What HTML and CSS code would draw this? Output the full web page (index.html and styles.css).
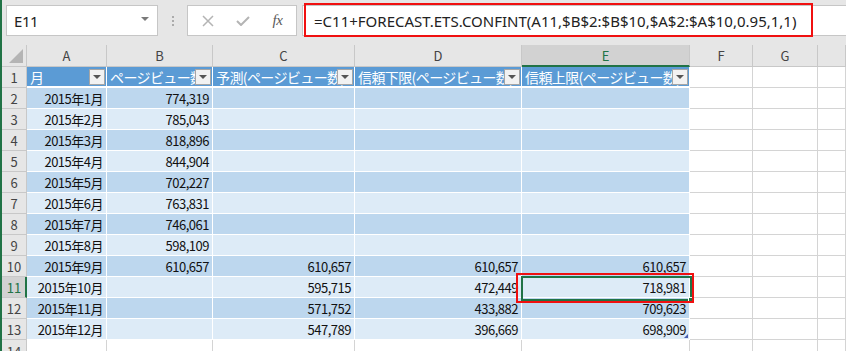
FILE: index.html
```html
<!DOCTYPE html>
<html lang="ja">
<head>
<meta charset="utf-8">
<link rel="stylesheet" href="styles.css">
</head>
<body>
<div class="app">
  <div class="fbar">
    <div class="namebox"><span class="nb-text">E11</span><span class="nb-arrow"></span></div>
    <div class="grip"><i></i><i></i><i></i></div>
    <div class="fbtns">
      <span class="fb"><svg width="12" height="12" viewBox="0 0 12 12"><path d="M1 1 L11 11 M11 1 L1 11" stroke="#b4b4b4" stroke-width="1.5" fill="none"/></svg></span>
      <span class="fb"><svg width="14" height="10" viewBox="0 0 14 10"><path d="M1 5 L5 9 L13 1" stroke="#b4b4b4" stroke-width="2" fill="none"/></svg></span>
      <span class="fb fx">fx</span>
    </div>
    <div class="finput"><span class="ftext">=C11+FORECAST.ETS.CONFINT(A11,$B$2:$B$10,$A$2:$A$10,0.95,1,1)</span></div>
    <div class="annot annot-formula"></div>
  </div>

  <div class="sheet">
    <div class="row colhdr">
      <div class="corner"><span class="corner-tri"></span></div>
      <div class="ch">A</div><div class="ch">B</div><div class="ch">C</div><div class="ch">D</div><div class="ch ch-sel">E</div><div class="ch">F</div><div class="ch">G</div><div class="ch"></div>
    </div>

    <div class="row">
      <div class="rh">1</div>
      <div class="c th"><span class="tht">月</span><span class="dd"></span></div>
      <div class="c th"><span class="tht">ページビュー数</span><span class="dd"></span></div>
      <div class="c th"><span class="tht">予測(ページビュー数)</span><span class="dd"></span></div>
      <div class="c th"><span class="tht">信頼下限(ページビュー数)</span><span class="dd"></span></div>
      <div class="c th"><span class="tht">信頼上限(ページビュー数)</span><span class="dd"></span></div>
      <div class="c"></div><div class="c"></div><div class="c"></div>
    </div>

    <div class="row band1"><div class="rh">2</div><div class="c t">2015年1月</div><div class="c t">774,319</div><div class="c t"></div><div class="c t"></div><div class="c t"></div><div class="c"></div><div class="c"></div><div class="c"></div></div>
    <div class="row band2"><div class="rh">3</div><div class="c t">2015年2月</div><div class="c t">785,043</div><div class="c t"></div><div class="c t"></div><div class="c t"></div><div class="c"></div><div class="c"></div><div class="c"></div></div>
    <div class="row band1"><div class="rh">4</div><div class="c t">2015年3月</div><div class="c t">818,896</div><div class="c t"></div><div class="c t"></div><div class="c t"></div><div class="c"></div><div class="c"></div><div class="c"></div></div>
    <div class="row band2"><div class="rh">5</div><div class="c t">2015年4月</div><div class="c t">844,904</div><div class="c t"></div><div class="c t"></div><div class="c t"></div><div class="c"></div><div class="c"></div><div class="c"></div></div>
    <div class="row band1"><div class="rh">6</div><div class="c t">2015年5月</div><div class="c t">702,227</div><div class="c t"></div><div class="c t"></div><div class="c t"></div><div class="c"></div><div class="c"></div><div class="c"></div></div>
    <div class="row band2"><div class="rh">7</div><div class="c t">2015年6月</div><div class="c t">763,831</div><div class="c t"></div><div class="c t"></div><div class="c t"></div><div class="c"></div><div class="c"></div><div class="c"></div></div>
    <div class="row band1"><div class="rh">8</div><div class="c t">2015年7月</div><div class="c t">746,061</div><div class="c t"></div><div class="c t"></div><div class="c t"></div><div class="c"></div><div class="c"></div><div class="c"></div></div>
    <div class="row band2"><div class="rh">9</div><div class="c t">2015年8月</div><div class="c t">598,109</div><div class="c t"></div><div class="c t"></div><div class="c t"></div><div class="c"></div><div class="c"></div><div class="c"></div></div>
    <div class="row band1"><div class="rh">10</div><div class="c t">2015年9月</div><div class="c t">610,657</div><div class="c t">610,657</div><div class="c t">610,657</div><div class="c t">610,657</div><div class="c"></div><div class="c"></div><div class="c"></div></div>
    <div class="row band2 row-active"><div class="rh rh-sel">11</div><div class="c t">2015年10月</div><div class="c t"></div><div class="c t">595,715</div><div class="c t">472,449</div><div class="c t active">718,981<span class="sel-box"><span class="fill-handle"></span></span><span class="annot annot-cell"></span></div><div class="c"></div><div class="c"></div><div class="c"></div></div>
    <div class="row band1"><div class="rh">12</div><div class="c t">2015年11月</div><div class="c t"></div><div class="c t">571,752</div><div class="c t">433,882</div><div class="c t">709,623</div><div class="c"></div><div class="c"></div><div class="c"></div></div>
    <div class="row band2"><div class="rh">13</div><div class="c t">2015年12月</div><div class="c t"></div><div class="c t">547,789</div><div class="c t">396,669</div><div class="c t last">698,909<span class="resize"></span></div><div class="c"></div><div class="c"></div><div class="c"></div></div>
    <div class="row row-partial"><div class="rh">14</div><div class="c"></div><div class="c"></div><div class="c"></div><div class="c"></div><div class="c"></div><div class="c"></div><div class="c"></div><div class="c"></div></div>
  </div>
</div>
</body>
</html>
```

FILE: styles.css
```css
* { box-sizing: border-box; }
html, body { margin: 0; padding: 0; }
body {
  width: 846px;
  height: 351px;
  overflow: hidden;
  background: #ffffff;
  font-family: "Noto Sans CJK JP", "Noto Sans", sans-serif;
}
.app {
  width: 846px;
  height: 351px;
  border-left: 2px solid #217346;
  overflow: hidden;
}

/* formula bar */
.fbar {
  position: relative;
  height: 45px;
  background: #e6e6e6;
  display: flex;
  align-items: flex-start;
  padding: 5px 0 0 4px;
}
.namebox {
  width: 152px;
  height: 31px;
  background: #fff;
  border: 1px solid #c6c6c6;
  display: flex;
  align-items: center;
  justify-content: space-between;
  padding: 0 8px 0 7px;
}
.nb-text {
  font-family: "Noto Sans", sans-serif;
  font-size: 15px;
  color: #222;
  letter-spacing: -0.4px;
}
.nb-arrow {
  width: 0; height: 0;
  border-left: 4px solid transparent;
  border-right: 4px solid transparent;
  border-top: 4px solid #7a7a7a;
  margin-top: -3px;
}
.grip {
  width: 29px;
  height: 31px;
  display: flex;
  flex-direction: column;
  align-items: center;
  justify-content: center;
  gap: 2px;
}
.grip i {
  display: block;
  width: 2px;
  height: 2px;
  background: #ababab;
}
.fbtns {
  width: 110px;
  height: 31px;
  background: #fff;
  border: 1px solid #c6c6c6;
  display: flex;
  align-items: center;
  padding-left: 2px;
}
.fb {
  width: 35px;
  display: flex;
  justify-content: center;
  align-items: center;
}
.fx {
  font-family: "Liberation Serif", serif;
  font-style: italic;
  font-size: 15px;
  color: #5a5a5a;
  letter-spacing: -0.5px;
}
.finput {
  flex: 1;
  margin-left: 5px;
  height: 31px;
  background: #fff;
  border: 1px solid #c6c6c6;
  border-right: none;
  display: flex;
  align-items: center;
  padding-left: 11px;
}
.ftext {
  font-family: "Noto Sans", sans-serif;
  font-size: 15px;
  color: #222;
  white-space: nowrap;
}
.annot {
  position: absolute;
  border: 2px solid #f01010;
  pointer-events: none;
}
.annot-formula {
  left: 302px;
  top: 3px;
  width: 509px;
  height: 34px;
}

/* sheet */
.sheet { font-size: 13px; letter-spacing: -0.5px; }
.row {
  display: grid;
  grid-template-columns: 25px 80px 106px 142px 167px 168px 63px 65px 1fr;
  height: 21px;
}
.row-active { position: relative; z-index: 5; }
.row-partial .rh { align-items: flex-start; padding-top: 2px; }
.colhdr { height: 22px; }
.corner, .ch, .rh {
  background: #e6e6e6;
  border-right: 1px solid #c8c8c8;
  border-bottom: 1px solid #c8c8c8;
  color: #444;
  display: flex;
  align-items: center;
  justify-content: center;
}
.corner {
  position: relative;
  align-items: flex-end;
  justify-content: flex-end;
  padding: 0 3px 3px 0;
}
.corner-tri {
  width: 0; height: 0;
  border-left: 14px solid transparent;
  border-bottom: 14px solid #b4b4b4;
}
.ch { font-size: 13px; letter-spacing: 0; }
.ch-sel {
  background: #d2d2d2;
  color: #217346;
  border-bottom: 2px solid #217346;
  padding-top: 1px;
}
.rh { font-size: 13px; letter-spacing: 0; }
.rh-sel {
  background: #d2d2d2;
  color: #217346;
  border-right: 2px solid #217346;
  padding-left: 1px;
}
.c {
  position: relative;
  border-right: 1px solid #d4d4d4;
  border-bottom: 1px solid #d4d4d4;
  display: flex;
  align-items: center;
  justify-content: flex-end;
  padding-right: 3px;
  color: #111;
  white-space: nowrap;
}
.c.t { border-color: #ffffff; }
.band1 .c.t { background: #bdd7ee; }
.band2 .c.t { background: #ddebf7; }
.th {
  background: #5b9bd5;
  border-right: 1px solid #ffffff;
  border-bottom: 2px solid #ffffff;
  color: #ffffff;
  justify-content: flex-start;
  padding-left: 3px;
  overflow: hidden;
  font-size: 14px;
  letter-spacing: -0.6px;
}
.tht { white-space: nowrap; }
.dd {
  position: absolute;
  right: 1px;
  top: 2px;
  width: 16px;
  height: 16px;
  background: #f2f2f2;
  border: 1px solid #a6a6a6;
  display: flex;
  align-items: center;
  justify-content: center;
}
.dd::after {
  content: "";
  width: 0; height: 0;
  border-left: 4px solid transparent;
  border-right: 4px solid transparent;
  border-top: 4px solid #555;
}
.active { z-index: 5; }
.sel-box {
  position: absolute;
  left: -1px;
  top: -1px;
  width: 171px;
  height: 25px;
  border: 2px solid #217346;
}
.fill-handle {
  position: absolute;
  right: -4px;
  bottom: -4px;
  width: 6px;
  height: 6px;
  background: #217346;
  border: 1px solid #fff;
}
.annot-cell {
  left: -6px;
  top: -4px;
  width: 178px;
  height: 30px;
}
.resize {
  position: absolute;
  right: 1px;
  bottom: 1px;
  width: 0; height: 0;
  border-left: 4px solid transparent;
  border-bottom: 4px solid #4a5fb0;
}
```
